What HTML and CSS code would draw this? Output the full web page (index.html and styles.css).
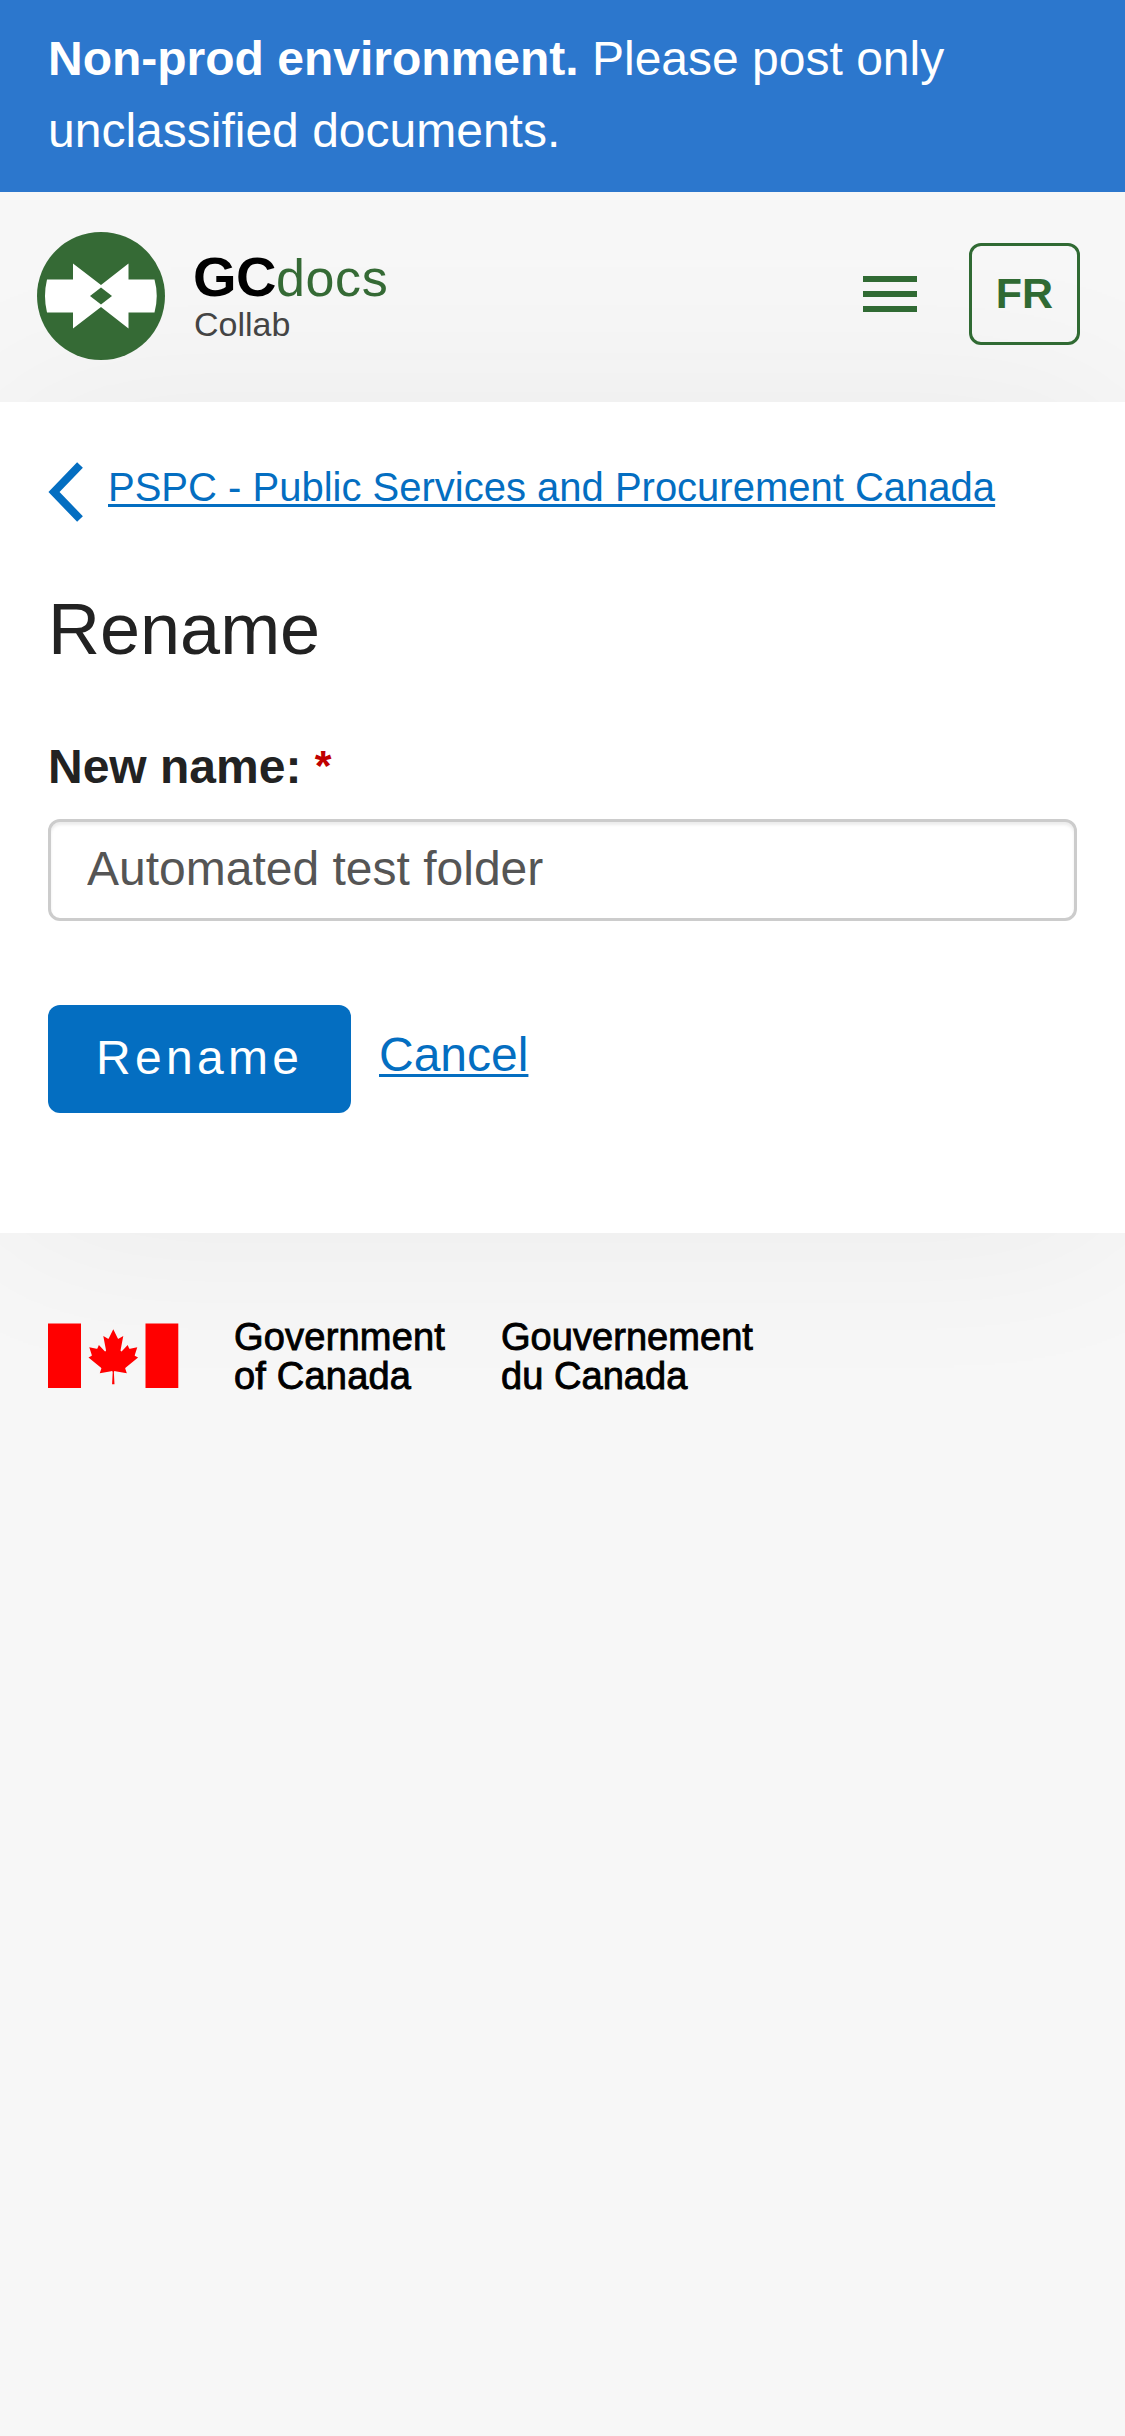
FILE: index.html
```html
<!DOCTYPE html>
<html lang="en">
<head>
<meta charset="utf-8">
<title>Rename - GCdocs Collab</title>
<link rel="stylesheet" href="styles.css">
</head>
<body>
<div class="banner"><strong>Non-prod environment.</strong> Please post only unclassified documents.</div>
<header class="header">
  <div class="brand">
    <svg class="brand-mark" viewBox="0 0 128 128" aria-hidden="true">
      <circle cx="64" cy="64" r="64" fill="#356a35"/>
      <path fill="#fff" d="M10 47.500H36V31.500L64 53L91.500 31.500V47.500H117.500Q122 64 117.500 80.500H91.500V96.500L64 75L36 96.500V80.500H10Q6 64 10 47.500Z"/>
      <path fill="#356a35" d="M53 64L64 55.500L75 64L64 72.500Z"/>
    </svg>
    <div class="brand-text">
      <div class="brand-name"><b>GC</b><span>docs</span></div>
      <div class="brand-sub">Collab</div>
    </div>
  </div>
  <div class="tools">
    <button class="menu" aria-label="Menu"><i></i><i></i><i></i></button>
    <a class="lang">FR</a>
  </div>
</header>
<main class="main">
  <nav class="crumb">
    <svg class="chevron" viewBox="0 0 35 60" aria-hidden="true"><path d="M32 3L6 30L32 57" fill="none" stroke="#046ec1" stroke-width="8"/></svg>
    <a class="link">PSPC - Public Services and Procurement Canada</a>
  </nav>
  <h1 class="title">Rename</h1>
  <label class="label" for="name">New name: <span class="required">*</span></label>
  <input class="field" id="name" type="text" value="Automated test folder">
  <div class="actions">
    <button class="submit">Rename</button>
    <a class="link">Cancel</a>
  </div>
</main>
<footer class="footer">
  <svg class="flag" viewBox="0 0 131 65" aria-hidden="true">
    <path fill="#f00" d="M0 .5H33V65H0ZM97.500 .5H130.300V65H97.500Z"/>
    <path fill="#f00" transform="translate(1.300 .800) scale(.01333 .01365)" d="m4890 4430-45-863a95 95 0 0 1 111-98l859 151-116-320a65 65 0 0 1 20-73l941-762-212-99a65 65 0 0 1-34-79l186-572-542 115a65 65 0 0 1-73-38l-105-247-423 454a65 65 0 0 1-111-57l204-1052-327 189a65 65 0 0 1-91-27l-332-652-332 652a65 65 0 0 1-91 27l-327-189 204 1052a65 65 0 0 1-111 57l-423-454-105 247a65 65 0 0 1-73 38l-542-115 186 572a65 65 0 0 1-34 79l-212 99 941 762a65 65 0 0 1 20 73l-116 320 859-151a95 95 0 0 1 111 98l-45 863z"/>
  </svg>
  <div class="wordmark">Government<br>of Canada</div>
  <div class="wordmark wordmark-fr">Gouvernement<br>du Canada</div>
</footer>
</body>
</html>
```
FILE: styles.css
```css
* { box-sizing: border-box; }

body {
  margin: 0;
  min-height: 2436px;
  overflow-x: hidden;
  background: #f7f7f7;
  color: #222;
  font-family: "Liberation Sans", Arial, sans-serif;
  font-size: 48px;
}

.banner {
  position: relative;
  z-index: 1;
  height: 192px;
  padding: 22.5px 48px;
  background: #2c77cd;
  color: #fff;
  line-height: 72px;
}

.header {
  display: flex;
  justify-content: space-between;
  height: 210px;
  padding: 40px 45px 0 37px;
}

.header > *, .footer > * { position: relative; z-index: 1; }

.brand { display: flex; gap: 28px; }
.brand-mark { width: 128px; height: 128px; }
.brand-text { padding-top: 17px; }

.brand-name {
  height: 55px;
  line-height: 55px;
  font-size: 52px;
  letter-spacing: .6px;
  color: #356a35;
  white-space: nowrap;
}
.brand-name b {
  color: #000;
  font-size: 56px;
  letter-spacing: -.5px;
}
.brand-sub {
  padding-left: 1px;
  line-height: 40px;
  font-size: 34px;
  color: #444;
}

.tools {
  display: flex;
  gap: 52px;
  padding-top: 11px;
}
.menu {
  display: flex;
  flex-direction: column;
  gap: 9px;
  width: 54px;
  height: 69px;
  padding: 33px 0 0;
  border: 0;
  background: none;
}
.menu i {
  height: 6px;
  background: #306a33;
}
.lang {
  width: 111px;
  height: 102px;
  border: 3px solid #306a33;
  border-radius: 12px;
  color: #306a33;
  font-size: 43px;
  font-weight: bold;
  line-height: 95px;
  text-align: center;
}

.main {
  height: 831px;
  padding: 60px 48px 0;
  background: #fff;
  box-shadow: 0 0 180px rgba(0, 0, 0, .05);
}

.link {
  color: #046ec1;
  text-decoration: underline;
  text-decoration-thickness: 3px;
  text-underline-offset: 3px;
  text-decoration-skip-ink: none;
}

.crumb {
  display: flex;
  gap: 25px;
  height: 60px;
  font-size: 40px;
  line-height: 50px;
  white-space: nowrap;
}
.chevron { width: 35px; height: 60px; }

.title {
  margin: 62px 0 0;
  font-size: 72px;
  font-weight: normal;
  line-height: 90px;
}

.label {
  display: block;
  height: 66px;
  margin-top: 60px;
  font-weight: bold;
  line-height: 65px;
}
.required {
  color: #c00000;
  font-size: 43px;
  line-height: 1;
  vertical-align: 3px;
}

.field {
  display: block;
  width: 100%;
  height: 102px;
  margin-top: 19px;
  padding: 0 36px 4px;
  border: 3px solid #ccc;
  border-radius: 12px;
  background: #fff;
  box-shadow: inset 0 3px 3px rgba(0, 0, 0, .075);
  color: #555;
  font: inherit;
}

.actions {
  display: flex;
  gap: 28px;
  margin-top: 84px;
  line-height: 99px;
}
.submit {
  width: 303px;
  height: 108px;
  padding: 0 0 4px 48px;
  border: 0;
  border-radius: 12px;
  background: #046ec1;
  color: #fff;
  font: inherit;
  letter-spacing: 4.3px;
  text-align: left;
}

.footer {
  display: flex;
  padding: 90px 48px;
}
.flag { width: 131px; height: 65px; }
.wordmark {
  width: 267px;
  margin: -5px 0 0 55px;
  color: #000;
  font-size: 38px;
  letter-spacing: .2px;
  line-height: 38.5px;
  white-space: nowrap;
  -webkit-text-stroke: .9px #000;
}
.wordmark-fr {
  margin-left: 0;
  letter-spacing: .05px;
}
```
